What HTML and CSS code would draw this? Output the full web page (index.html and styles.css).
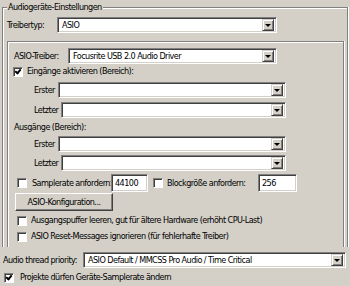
FILE: index.html
```html
<!DOCTYPE html>
<html lang="de">
<head>
<meta charset="utf-8">
<title>Audiogeräte-Einstellungen</title>
<link rel="stylesheet" href="styles.css">
</head>
<body>
<div class="page">
  <div class="group outer">
    <div class="caption">Audiogeräte-Einstellungen</div>
    <div class="row r-type">
      <span class="lbl l-type">Treibertyp:</span>
      <div class="combo w-type"><span class="val">ASIO</span><span class="drop"></span></div>
    </div>
    <div class="group inner">
      <div class="row r-drv">
        <span class="lbl l-drv">ASIO-Treiber:</span>
        <div class="combo w-drv"><span class="val">Focusrite USB 2.0 Audio Driver</span><span class="drop"></span></div>
      </div>
      <div class="chk-row r-in">
        <span class="chk checked"></span><span class="txt">Eingänge aktivieren (Bereich):</span>
      </div>
      <div class="row sub s1">
        <span class="lbl">Erster</span>
        <div class="combo grow"><span class="val"></span><span class="drop"></span></div>
      </div>
      <div class="row sub s2">
        <span class="lbl">Letzter</span>
        <div class="combo grow"><span class="val"></span><span class="drop"></span></div>
      </div>
      <div class="plain r-out">Ausgänge (Bereich):</div>
      <div class="row sub s3">
        <span class="lbl">Erster</span>
        <div class="combo grow"><span class="val"></span><span class="drop"></span></div>
      </div>
      <div class="row sub s4">
        <span class="lbl">Letzter</span>
        <div class="combo grow"><span class="val"></span><span class="drop"></span></div>
      </div>
      <div class="row r-sr">
        <span class="chk"></span><span class="txt t-sr">Samplerate anfordern:</span>
        <div class="edit w-sr">44100</div>
        <span class="chk c-bs"></span><span class="txt t-bs">Blockgröße anfordern:</span>
        <div class="edit w-bs">256</div>
      </div>
      <div class="btn-row"><div class="button">ASIO-Konfiguration...</div></div>
      <div class="chk-row r-buf">
        <span class="chk"></span><span class="txt">Ausgangspuffer leeren, gut für ältere Hardware (erhöht CPU-Last)</span>
      </div>
      <div class="chk-row r-rst">
        <span class="chk"></span><span class="txt">ASIO Reset-Messages ignorieren (für fehlerhafte Treiber)</span>
      </div>
    </div>
  </div>
  <div class="row r-prio">
    <span class="lbl l-prio">Audio thread priority:</span>
    <div class="combo w-prio"><span class="val">ASIO Default / MMCSS Pro Audio / Time Critical</span><span class="drop"></span></div>
  </div>
  <div class="chk-row r-proj">
    <span class="chk checked"></span><span class="txt">Projekte dürfen Geräte-Samplerate ändern</span>
  </div>
</div>
</body>
</html>
```
FILE: styles.css
```css
html, body {
  margin: 0;
  padding: 0;
  background: #d4d0c8;
}
body {
  width: 350px;
  height: 286px;
  overflow: hidden;
  font-family: "DejaVu Sans Condensed", "Liberation Sans", sans-serif;
  font-size: 9px;
  letter-spacing: -0.55px;
  color: #000;
}
.page {
  padding-top: 7px;
}
.group {
  border: 1px solid #808080;
  border-bottom: none;
  box-shadow: inset 1px 1px 0 #fff, 1px 0 0 #fff;
}
.outer {
  margin-left: 2px;
  box-sizing: border-box;
  padding-left: 4px;
  width: 346px;
  height: 240px;
}
.caption {
  margin-top: -7px;
  height: 13px;
  line-height: 13px;
  width: fit-content;
  padding: 0 1px;
  background: #d4d0c8;
}
.row {
  display: flex;
  align-items: center;
  height: 16px;
}
.lbl, .txt, .plain {
  white-space: nowrap;
  line-height: 13px;
}
.r-type { margin-top: 3px; }
.l-type { width: 50px; flex: none; }
.w-type { width: 220px; }

.inner {
  margin-top: 8px;
  width: 337px;
  box-sizing: border-box;
  height: 206px;
  padding-top: 6px;
}
.r-drv { padding-left: 6px; }
.l-drv { width: 54px; flex: none; }
.w-drv { width: 209px; }

.chk-row {
  display: flex;
  align-items: center;
  height: 13px;
}
.r-in { margin-top: 1px; padding-left: 5px; }
.r-in .txt { margin-left: 4px; }

.sub {
  padding-left: 26px;
  margin-right: 57px;
  gap: 3px;
}
.s1 { margin-top: 4px; }
.s2 { margin-top: 4px; }
.s3 { margin-top: 2px; }
.s4 { margin-top: 3px; }
.grow { flex: 1; }

.plain { margin-top: 3px; padding-left: 6px; height: 13px; }

.r-sr {
  margin-top: 3px;
  height: 18px;
  padding-left: 9px;
}
.t-sr { margin-left: 5px; width: 79px; flex: none; }
.c-bs { margin-left: 5px; }
.t-bs { margin-left: 4px; width: 91px; flex: none; }
.w-sr { width: 37px; }
.w-bs { width: 39px; }

.btn-row { margin-top: 1px; padding-left: 7px; }
.button {
  width: 98px;
  height: 18px;
  box-sizing: border-box;
  display: flex;
  align-items: center;
  justify-content: center;
  border: 1px solid;
  border-color: #fff #404040 #404040 #fff;
  box-shadow: inset -1px -1px 0 #808080;
  white-space: nowrap;
}

.r-buf { margin-top: 3px; padding-left: 9px; }
.r-rst { margin-top: 3px; padding-left: 9px; }
.r-buf .txt, .r-rst .txt { margin-left: 4px; }

.r-prio { margin-top: 5px; padding-left: 3px; }
.l-prio { width: 80px; flex: none; }
.w-prio { width: 263px; }

.r-proj { margin-top: 3px; padding-left: 4px; }
.r-proj .txt { margin-left: 6px; }

/* controls */
.combo, .edit {
  height: 16px;
  box-sizing: border-box;
  background: #fff;
  border: 1px solid;
  border-color: #808080 #fff #fff #808080;
  box-shadow: inset 1px 1px 0 #404040, inset -1px -1px 0 #d4d0c8;
  display: flex;
  align-items: center;
  padding: 2px;
}
.edit {
  height: 18px;
  padding-left: 3px;
  line-height: 13px;
}
.combo .val {
  flex: 1;
  white-space: nowrap;
  overflow: hidden;
  padding-left: 2px;
  line-height: 12px;
}
.drop {
  width: 12px;
  height: 12px;
  box-sizing: border-box;
  background: #d4d0c8;
  border: 1px solid;
  border-color: #d4d0c8 #404040 #404040 #d4d0c8;
  box-shadow: inset 1px 1px 0 #fff, inset -1px -1px 0 #808080;
  position: relative;
  flex: none;
}
.drop::after {
  content: "";
  position: absolute;
  left: 2px;
  top: 4px;
  border-left: 3px solid transparent;
  border-right: 3px solid transparent;
  border-top: 3px solid #000;
}
.chk {
  width: 10px;
  height: 10px;
  box-sizing: border-box;
  flex: none;
  background: #fff;
  border: 1px solid;
  border-color: #808080 #fff #fff #808080;
  box-shadow: inset 1px 1px 0 #404040;
  position: relative;
}
.chk.checked::after {
  content: "";
  position: absolute;
  left: 2px;
  top: 0px;
  width: 2px;
  height: 4px;
  border: solid #000;
  border-width: 0 2px 2px 0;
  transform: rotate(40deg);
}
```
